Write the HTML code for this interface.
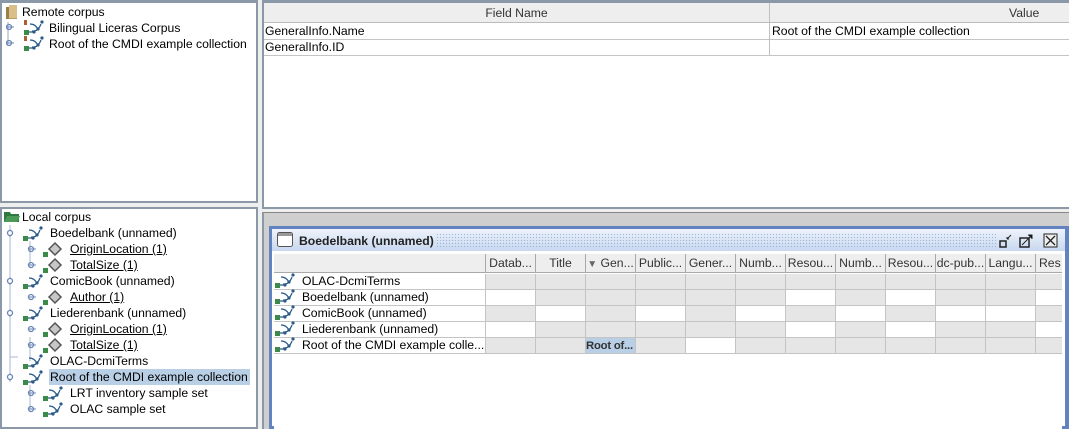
<!DOCTYPE html><html><head><style>
*{margin:0;padding:0;box-sizing:border-box}
body{width:1069px;height:429px;background:#eeeeee;font-family:"Liberation Sans",sans-serif;font-size:12.2px;color:#000;position:relative;overflow:hidden}
.a{position:absolute}
.t{position:absolute;white-space:nowrap;line-height:16px}
u{text-decoration:underline}
.cell{position:absolute;height:16px;border-right:1px solid #c4c4c4;border-bottom:1px solid #c4c4c4;white-space:nowrap;overflow:hidden}
.g{background:#e6e6e6}.w{background:#fff}
.hd{position:absolute;top:0;height:19px;border-right:1px solid #a8a8a8;color:#333;text-align:center;line-height:19px;font-size:12.2px;overflow:hidden;white-space:nowrap}
</style></head><body>
<svg width="0" height="0" style="position:absolute"><defs>
<g id="nd"><rect x="0" y="10" width="5" height="5" fill="#3c8a4a"/><path d="M5 12 L9 12 M8 11 Q14 12 17 4 M6 4 Q12 4 14 10" stroke="#2a5a88" stroke-width="1.2" fill="none"/><circle cx="10" cy="12" r="1.6" fill="#2a5a88"/><circle cx="14" cy="9" r="1.6" fill="#2a5a88"/><circle cx="18" cy="2" r="1.6" fill="#2a5a88"/></g>
<g id="dm"><rect x="0" y="11" width="5" height="5" fill="#3c8a4a"/><path d="M12 2 L18 8 L12 14 L6 8Z" fill="#c8c8c8" stroke="#555" stroke-width="1.5"/></g>
<g id="kn"><path d="M0 4 H8" stroke="#6a86b6"/><circle cx="3" cy="4" r="2.5" fill="none" stroke="#6a86b6" stroke-width="1.3"/></g>
<g id="kv"><path d="M4 0 V8" stroke="#6a86b6"/><circle cx="4" cy="4" r="2.5" fill="#fff" stroke="#6a86b6" stroke-width="1.3"/></g>
</defs></svg>

<div class="a" style="left:0;top:0;width:258px;height:203px;background:#fff;border:2px solid #8a98a8;border-top:3px solid #8a98a8"></div>
<svg class="a" style="left:5px;top:4px" width="14" height="16"><rect x="1" y="3" width="11" height="12" fill="#b8a060"/><rect x="4" y="1" width="8" height="13" fill="#d8c088"/><rect x="1" y="3" width="3" height="12" fill="#9a8048"/></svg>
<div class="t" style="left:22px;top:4px">Remote corpus</div>
<svg class="a" style="left:6px;top:22px" width="40" height="40"><path d="M2 0 V22" stroke="#9ab" /><use href="#kn" y="1"/><use href="#kn" y="17"/></svg>
<svg class="a" style="left:24px;top:19px" width="22" height="18"><use href="#nd" y="1"/><rect x="0" y="1" width="3" height="5" fill="#b06030"/></svg>
<svg class="a" style="left:24px;top:35px" width="22" height="18"><use href="#nd" y="1"/><rect x="0" y="1" width="3" height="5" fill="#b06030"/></svg>
<div class="t" style="left:49px;top:20px">Bilingual Liceras Corpus</div>
<div class="t" style="left:49px;top:36px">Root of the CMDI example collection</div>

<div class="a" style="left:0;top:207px;width:258px;height:222px;background:#fff;border:2px solid #8a98a8"></div>
<svg class="a" style="left:4px;top:211px" width="16" height="12"><path d="M0 1 H6 L7 3 H15 V11 H0Z" fill="#2e7a3e"/><path d="M0 11 L3 5 H16 L13 11Z" fill="#4a9a58"/></svg>
<div class="t" style="left:22px;top:209px">Local corpus</div>
<svg class="a" style="left:6px;top:225px" width="44" height="200">
<path d="M4 0 V157" stroke="#a8b8d0"/>
<path d="M24 16 V40 M24 112 V136 M24 160 V184" stroke="#a8b8d0"/>
<use href="#kv" x="0" y="4"/><use href="#kv" x="0" y="52"/><use href="#kv" x="0" y="84"/><use href="#kv" x="0" y="148"/>
<path d="M4 132 H12" stroke="#a8b8d0"/>
<use href="#kn" x="22" y="20"/><use href="#kn" x="22" y="36"/><use href="#kn" x="22" y="68"/><use href="#kn" x="22" y="100"/><use href="#kn" x="22" y="116"/><use href="#kn" x="22" y="164"/><use href="#kn" x="22" y="180"/>
</svg>
<svg class="a" style="left:23px;top:226px" width="26" height="160"><use href="#nd" y="0"/><use href="#nd" y="48"/><use href="#nd" y="80"/><use href="#nd" y="128"/><use href="#nd" y="144"/></svg>
<svg class="a" style="left:43px;top:241px" width="26" height="180"><use href="#dm" y="0"/><use href="#dm" y="16"/><use href="#dm" y="48"/><use href="#dm" y="80"/><use href="#dm" y="96"/><use href="#nd" y="145"/><use href="#nd" y="161"/></svg>
<div class="t" style="left:50px;top:225px">Boedelbank (unnamed)</div>
<div class="t" style="left:70px;top:241px"><u>OriginLocation (1)</u></div>
<div class="t" style="left:70px;top:257px"><u>TotalSize (1)</u></div>
<div class="t" style="left:50px;top:273px">ComicBook (unnamed)</div>
<div class="t" style="left:70px;top:289px"><u>Author (1)</u></div>
<div class="t" style="left:50px;top:305px">Liederenbank (unnamed)</div>
<div class="t" style="left:70px;top:321px"><u>OriginLocation (1)</u></div>
<div class="t" style="left:70px;top:337px"><u>TotalSize (1)</u></div>
<div class="t" style="left:50px;top:353px">OLAC-DcmiTerms</div>
<div class="a" style="left:49px;top:369px;width:201px;height:16px;background:#b8cfe5"></div>
<div class="t" style="left:50px;top:369px">Root of the CMDI example collection</div>
<div class="t" style="left:70px;top:385px">LRT inventory sample set</div>
<div class="t" style="left:70px;top:401px">OLAC sample set</div>

<div class="a" style="left:258px;top:0;width:4px;height:429px;background:#eeeeee"></div>

<div class="a" style="left:262px;top:0;width:807px;height:209px;background:#fff;border-top:3px solid #8a98a8;border-left:2px solid #8a98a8;border-bottom:2px solid #8a98a8"></div>
<div class="a" style="left:264px;top:3px;width:805px;height:20px;background:#eeeeee;border-bottom:1px solid #bbb"></div>
<div class="a" style="left:769px;top:3px;width:1px;height:52px;background:#c0c0c0"></div>
<div class="t" style="left:264px;top:5px;width:505px;text-align:center;color:#333">Field Name</div>
<div class="t" style="left:1009px;top:5px;color:#333">Value</div>
<div class="a" style="left:264px;top:39px;width:805px;height:1px;background:#c4c4c4"></div>
<div class="a" style="left:264px;top:55px;width:805px;height:1px;background:#c4c4c4"></div>
<div class="t" style="left:265px;top:23px">GeneralInfo.Name</div>
<div class="t" style="left:772px;top:23px">Root of the CMDI example collection</div>
<div class="t" style="left:265px;top:39px">GeneralInfo.ID</div>

<div class="a" style="left:262px;top:212px;width:807px;height:217px;background:#cfcfcf;border-left:2px solid #8a98a8;border-top:1px solid #888"></div>
<div class="a" style="left:269px;top:226px;width:800px;height:203px;background:#fff;border:3px solid #6383c0;border-right:4px solid #6383c0"></div>
<div class="a" style="left:272px;top:229px;width:793px;height:22px;background:linear-gradient(#eef3fb,#c8d8ef)"></div>
<div class="a" style="left:436px;top:233px;width:560px;height:14px;background-image:radial-gradient(#9ab4dc 0.7px,transparent 0.8px);background-size:3px 3px"></div>
<svg class="a" style="left:277px;top:232px" width="16" height="15"><rect x="0.5" y="0.5" width="15" height="14" rx="2" fill="#fff" stroke="#555"/><rect x="1" y="1" width="14" height="3" fill="#999"/></svg>
<div class="t" style="left:299px;top:233px;font-weight:bold;color:#222">Boedelbank (unnamed)</div>
<svg class="a" style="left:998px;top:233px" width="60" height="16"><rect x="2" y="8" width="6" height="6" fill="none" stroke="#222" stroke-width="1.5"/><path d="M9 6 L13 2 M9 6 H11 M9 6 V4" stroke="#222"/><rect x="22" y="5" width="9" height="9" fill="none" stroke="#222" stroke-width="1.5"/><path d="M24 12 L33 3 M30 2 H34 V6" stroke="#222"/><rect x="46" y="1" width="13" height="13" fill="#eee" stroke="#222"/><path d="M48 3 L57 12 M57 3 L48 12" stroke="#222" stroke-width="1.3"/></svg>

<div class="a" style="left:274px;top:254px;width:788px;height:175px;background:#fff;overflow:hidden">
 <div class="a" style="left:0;top:0;width:788px;height:19px;background:#eeeeee;border-bottom:1px solid #a8a8a8"></div>
 <div class="hd" style="left:0;width:212px"></div>
 <div class="hd" style="left:212px;width:50px">Datab...</div>
 <div class="hd" style="left:262px;width:50px">Title</div>
 <div class="hd" style="left:312px;width:50px"><span style="color:#666;font-size:10px">▼</span> Gen...</div>
 <div class="hd" style="left:362px;width:50px">Public...</div>
 <div class="hd" style="left:412px;width:50px">Gener...</div>
 <div class="hd" style="left:462px;width:50px">Numb...</div>
 <div class="hd" style="left:512px;width:50px">Resou...</div>
 <div class="hd" style="left:562px;width:50px">Numb...</div>
 <div class="hd" style="left:612px;width:50px">Resou...</div>
 <div class="hd" style="left:662px;width:50px">dc-pub...</div>
 <div class="hd" style="left:712px;width:50px">Langu...</div>
 <div class="hd" style="left:762px;width:30px;text-align:left;padding-left:3px">Res</div>
 <div id="rows"></div>
</div>
<script>
var pat=["gggggggggggg","wgggggwgwggw","gwgwgwgwgwwg","wgggggwgwggw","ggsgwggggggg"];
var names=["OLAC-DcmiTerms","Boedelbank (unnamed)","ComicBook (unnamed)","Liederenbank (unnamed)","Root of the CMDI example colle..."];
var h="";
for(var r=0;r<5;r++){var y=20+r*16;
h+='<div class="cell w" style="left:0;top:'+y+'px;width:212px"></div>';
h+='<svg class="a" style="left:1px;top:'+(y-1)+'px" width="22" height="17"><use href="#nd"/></svg>';
h+='<div class="t" style="left:28px;top:'+(y-1)+'px">'+names[r]+'</div>';
for(var c=0;c<12;c++){var ch=pat[r][c];var x=212+c*50;
 if(ch=='s')h+='<div class="cell" style="left:'+x+'px;top:'+y+'px;width:50px;background:#b8cfe5;font-weight:bold;color:#333;line-height:16px;padding-left:0;font-size:11.3px;letter-spacing:-0.2px">Root of...</div>';
 else h+='<div class="cell '+ch+'" style="left:'+x+'px;top:'+y+'px;width:50px"></div>';}
}
document.getElementById('rows').innerHTML=h;
</script>
</body></html>
